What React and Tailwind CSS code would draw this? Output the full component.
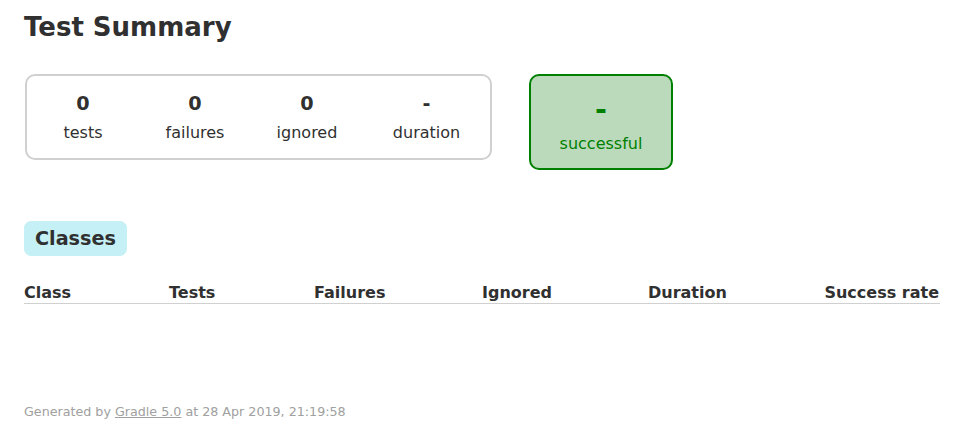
const counters = [
  { value: '0', label: 'tests', width: 'w-[112px]' },
  { value: '0', label: 'failures', width: 'w-[112px]' },
  { value: '0', label: 'ignored', width: 'w-[112px]' },
  { value: '-', label: 'duration', width: 'w-[127px]' },
];

const columns = ['Class', 'Tests', 'Failures', 'Ignored', 'Duration'];

const InfoBox = ({ value, label, width }) => (
  <div className={`${width} pt-[17px] pb-[16px] text-center`}>
    <p className="text-[19.2px] font-bold leading-[22px] mb-[8px]">{value}</p>
    <p className="leading-[19px]">{label}</p>
  </div>
);

const App = () => {
  return (
    <div className="min-h-screen bg-white pl-[24px] pr-[28px] pt-[12px] font-['DejaVu_Sans',sans-serif] text-[16px] text-[#303030]">
      <h1 className="text-[26px] font-bold leading-[30px]">Test Summary</h1>

      <div className="mt-[32px] pl-[1px] flex items-start">
        <div className="flex border-2 border-[#d0d0d0] rounded-[10px]">
          {counters.map((c) => (
            <InfoBox key={c.label} {...c} />
          ))}
        </div>
        <div className="ml-[37px] w-[144px] border-2 border-[#008000] bg-[#bbd9bb] rounded-[10px] pt-[16px] pb-[15px] text-center text-[#008000]">
          <p className="text-[28.8px] font-bold leading-[34px] mb-[8px]">-</p>
          <p className="leading-[19px]">successful</p>
        </div>
      </div>

      <div className="mt-[51px] flex">
        <div className="border border-[#c5f0f5] bg-[#c5f0f5] rounded-[7px] px-[10px] py-[5px]">
          <h2 className="text-[19.2px] font-bold leading-[23px]">Classes</h2>
        </div>
      </div>

      <div className="mt-[27px] grid grid-cols-[145px_145px_168px_166px_1fr_auto] border-b border-[#d0d0d0] pb-[1px] font-bold leading-[19px]">
        {columns.map((col) => (
          <div key={col}>{col}</div>
        ))}
        <div className="text-right pr-[1px]">Success rate</div>
      </div>

      <div className="mt-[100px] text-[12.7px] leading-[15px] text-[#a0a0a0] whitespace-nowrap">
        Generated by <a href="#" className="underline text-[#a0a0a0]">Gradle 5.0</a> at 28 Apr 2019, 21:19:58
      </div>
    </div>
  );
};

export default App;
